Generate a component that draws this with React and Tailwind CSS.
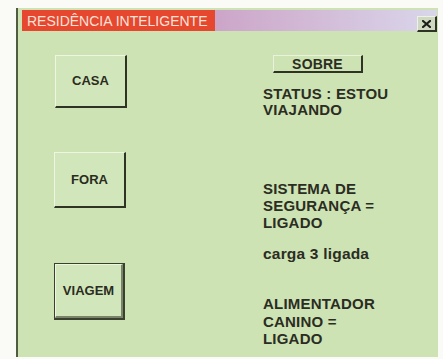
export default function App() {
  const font = { fontFamily: '"Liberation Sans", Arial, sans-serif' };
  const btn =
    "flex items-center justify-center bg-[#d2e6bc] border-t border-l border-t-[#eef6e2] border-l-[#eef6e2] border-r-2 border-b-2 border-r-[#2e3324] border-b-[#2e3324] text-[13px] font-bold text-[#2a2c20]";
  return (
    <div className="w-[443px] h-[359px] bg-[#fafaf6] overflow-hidden pt-[8px] pl-[16px]" style={font}>
      <div className="w-[422px] h-[349px] bg-[#cde3b4] border-l-2 border-[#4f5c40] flex flex-col">
        {/* title bar */}
        <div className="ml-[4px] mr-[1px] mt-[2px] h-[21px] flex">
          <div className="w-[193px] h-full bg-[#e5472f] flex items-center pl-[5px] text-[14px] text-[#fbe2d8] leading-none">
            RESIDÊNCIA INTELIGENTE
          </div>
          <div className="flex-1 h-full bg-gradient-to-r from-[#cca5c8] to-[#d9d6ea] flex justify-end items-end">
            <div className="w-[20px] h-[16px] mb-[-1px] bg-[#cfd9c2] border-t border-l border-[#eef2e6] border-r-2 border-b-2 border-r-[#2e3324] border-b-[#2e3324] flex items-center justify-center">
              <svg width="9" height="8" viewBox="0 0 9 8">
                <path d="M1 1 L8 7 M8 1 L1 7" stroke="#1e1e18" strokeWidth="2.2" strokeLinecap="square" />
              </svg>
            </div>
          </div>
        </div>
        {/* body */}
        <div className="flex flex-1">
          <div className="w-[245px] pl-[36px] pt-[24px] flex flex-col">
            <div className={`${btn} w-[72px] h-[53px] ml-[1px]`}>CASA</div>
            <div className={`${btn} w-[72px] h-[56px] mt-[44px]`}>FORA</div>
            <div className="w-[71px] h-[57px] mt-[55px] border border-[#3a4030] border-r-2 border-b-2 flex">
              <div className="flex-1 flex items-center justify-center bg-[#d2e6bc] border-t border-l border-[#eef6e2] border-r-2 border-b-2 border-r-[#7a8468] border-b-[#7a8468] text-[13px] font-bold text-[#2a2c20]">
                VIAGEM
              </div>
            </div>
          </div>
          <div className="flex-1 pt-[24px] flex flex-col text-[#2b2c22] font-bold text-[15px] tracking-[0.2px]">
            <div className="ml-[10px] w-[90px] h-[18px] flex items-center justify-center bg-[#cde3b4] border-t border-l border-[#e8f2dc] border-r-2 border-b-2 border-r-[#2e3324] border-b-[#2e3324] text-[14px] leading-none">
              SOBRE
            </div>
            <div className="mt-[13px] leading-[16px]">
              STATUS : ESTOU
              <br />
              VIAJANDO
            </div>
            <div className="mt-[62px] leading-[17px]">
              SISTEMA DE
              <br />
              SEGURANÇA =
              <br />
              LIGADO
            </div>
            <div className="mt-[14px] leading-[17px] text-[15.5px]">carga 3 ligada</div>
            <div className="mt-[33px] leading-[17.5px]">
              ALIMENTADOR
              <br />
              CANINO =
              <br />
              LIGADO
            </div>
          </div>
        </div>
      </div>
    </div>
  );
}
